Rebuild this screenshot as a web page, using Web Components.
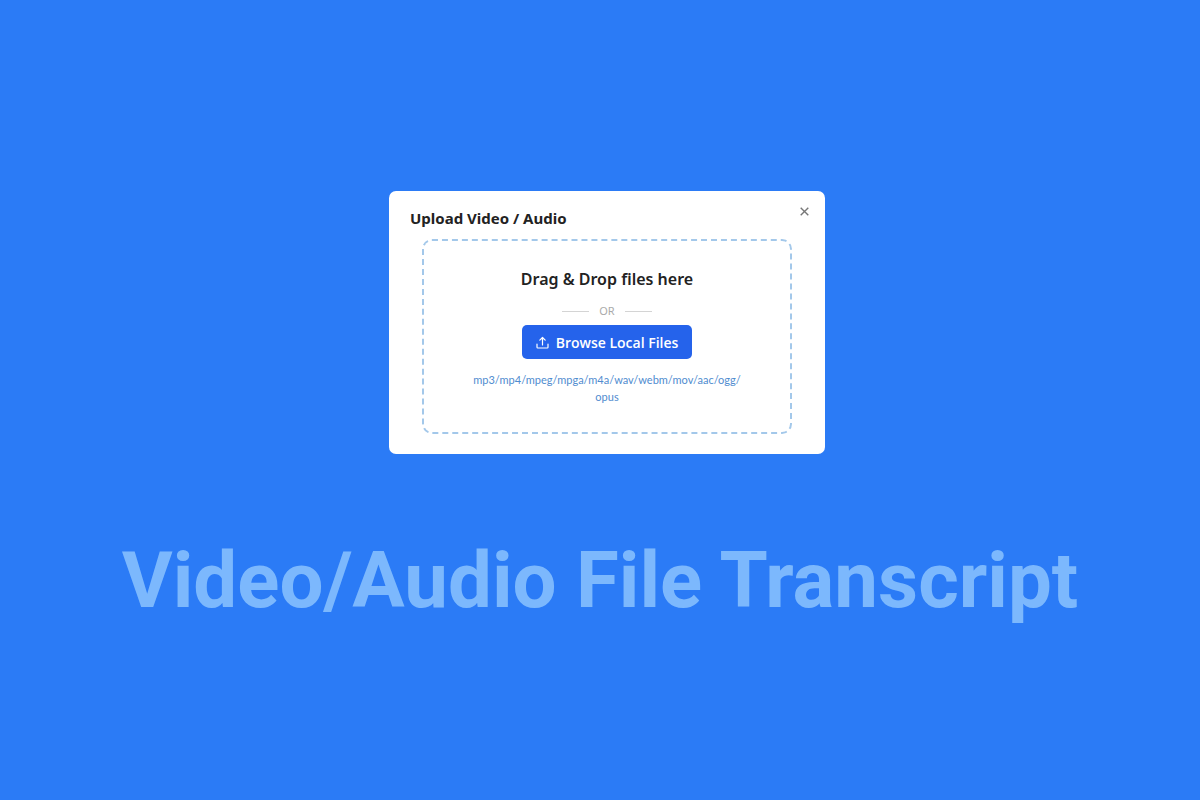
<!DOCTYPE html>
<html lang="en">
<head>
<meta charset="utf-8">
<meta name="viewport" content="width=device-width, initial-scale=1">
<title>Video/Audio File Transcript</title>
<style>
  body { margin: 0; background: #2b7bf6; font-family: "Noto Sans", "Open Sans", sans-serif; }
</style>
</head>
<body>
<promo-page>
  <upload-dialog heading="Upload Video / Audio">
    <drop-zone>
      <span slot="title">Drag &amp; Drop files here</span>
      <span slot="divider">OR</span>
      <browse-button slot="action">Browse Local Files</browse-button>
      <span slot="formats">mp3/mp4/mpeg/mpga/m4a/wav/webm/mov/aac/ogg/<wbr>opus</span>
    </drop-zone>
  </upload-dialog>
  <span slot="caption">Video/Audio File Transcript</span>
</promo-page>
<script>
  const define = (name, html, setup) => {
    const template = document.createElement('template');
    template.innerHTML = html;
    customElements.define(name, class extends HTMLElement {
      constructor() {
        super();
        this.attachShadow({ mode: 'open' }).append(template.content.cloneNode(true));
      }
      connectedCallback() {
        if (setup) setup(this, this.shadowRoot);
      }
    });
  };

  define('promo-page', `
    <style>
      :host { display: block; box-sizing: border-box; min-height: 100vh; background: #2b7bf6; }
      main { display: flex; flex-direction: column; align-items: center; gap: 81px; padding: 191px 16px 0; }
      .stage { width: 100%; max-width: 436px; margin-left: 14px; }
      h1 { margin: 0; color: #7cb8fd; font: 700 78px/92px Roboto, sans-serif; text-align: center; }
    </style>
    <main>
      <div class="stage"><slot></slot></div>
      <h1><slot name="caption"></slot></h1>
    </main>`);

  define('upload-dialog', `
    <style>
      :host { display: block; }
      section { background: #fff; border-radius: 7px; padding: 12px 33px 20px; }
      header { display: flex; align-items: flex-start; justify-content: space-between; margin: 0 -21px 9px -12px; }
      h2 { margin: 0; padding-top: 4px; color: #222; font-size: 15px; line-height: 23px; font-weight: 700; }
      button { display: flex; padding: 4px; border: 0; background: none; color: #777; cursor: pointer; }
      svg { display: block; width: 9px; height: 9px; }
    </style>
    <section role="dialog" aria-labelledby="heading">
      <header>
        <h2 id="heading"></h2>
        <button type="button" aria-label="Close">
          <svg viewBox="0 0 9 9" fill="none" stroke="currentColor" stroke-width="1.4"><path d="M.7.7l7.6 7.6M8.3.7L.7 8.3"/></svg>
        </button>
      </header>
      <slot></slot>
    </section>`, (host, root) => {
      root.querySelector('h2').textContent = host.getAttribute('heading');
    });

  define('drop-zone', `
    <style>
      :host { display: block; }
      .zone { display: flex; flex-direction: column; align-items: center; border: 2px dashed #a3c8ea; border-radius: 10px; padding: 25px 46px 27px; }
      h3 { margin: 0; color: #222; font-size: 16px; line-height: 26px; font-weight: 600; }
      .or { display: flex; align-items: center; gap: 10px; margin: 11px 0 6px; color: #aaa; font-size: 11px; line-height: 16px; }
      .or::before, .or::after { content: ""; width: 27px; height: 1px; background: #d4d4d4; }
      p { margin: 12px 0 0; color: #508ccf; font-family: Lato, sans-serif; font-size: 11px; line-height: 17px; text-align: center; }
    </style>
    <div class="zone">
      <h3><slot name="title"></slot></h3>
      <div class="or"><slot name="divider"></slot></div>
      <slot name="action"></slot>
      <p><slot name="formats"></slot></p>
    </div>`);

  define('browse-button', `
    <style>
      :host { display: block; }
      button { display: flex; align-items: center; gap: 7px; height: 34px; padding: 0 14px; border: 0; border-radius: 5px; background: #2563eb; color: #fff; font: 600 14px "Open Sans", sans-serif; cursor: pointer; }
      svg { display: block; width: 13px; height: 13px; }
    </style>
    <button type="button">
      <svg viewBox="0 0 13 13" fill="none" stroke="currentColor" stroke-width="1.2" stroke-linecap="round" stroke-linejoin="round" aria-hidden="true"><path d="M1 8v3.200q0 .8.8.8h9.400q.8 0 .8-.8V8M6.500 9V1.500M3.800 4.200L6.500 1.500l2.700 2.700"/></svg>
      <slot></slot>
    </button>`);
</script>
</body>
</html>
